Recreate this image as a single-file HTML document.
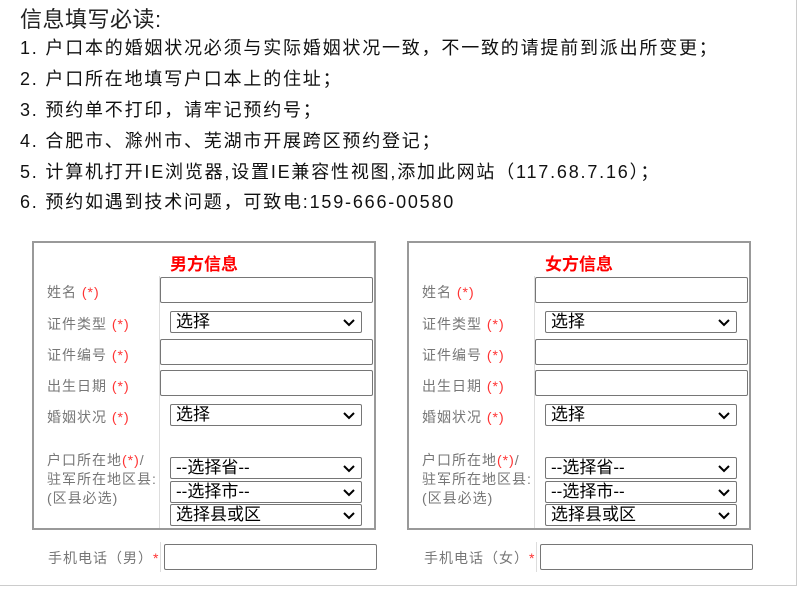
<!DOCTYPE html>
<html><head><meta charset="utf-8"><style>
*{box-sizing:border-box;margin:0;padding:0}
body{width:798px;height:596px;position:relative;background:#fff;font-family:"Liberation Sans","Noto Sans CJK SC",sans-serif;overflow:hidden}
.pg{position:absolute;left:0;top:0;width:797px;height:586px;border-right:1px solid #ccc;border-bottom:1px solid #ccc}
.t{position:absolute;left:20px;top:2px;font-size:22px;color:#222;letter-spacing:0.5px}
.l{position:absolute;left:20px;font-size:18px;color:#111;white-space:nowrap;letter-spacing:1.8px}
.box{position:absolute;top:241px;width:344px;height:289px;border:2px solid #999}
.box>*{position:absolute}
.h{left:0;width:340px;text-align:center;top:7px;color:#f00;font-weight:bold;font-size:17px}
.dv{left:125px;top:33px;bottom:0;width:1px;background:#ddd}
.lb{left:13px;font-size:14px;color:#777;white-space:nowrap;line-height:18px;letter-spacing:1px}
.r{color:#f33}
.in{left:126px;width:213px;height:26px;border:1px solid #767676;border-radius:2px}
.se{left:136px;width:192px;height:22px;border:1px solid #767676;border-radius:2px;font-size:17px;line-height:20px;padding-left:5px;color:#000;white-space:nowrap}
.se svg{position:absolute;right:6px;top:7px}
.ph{position:absolute;top:548px;font-size:14px;color:#777;letter-spacing:1px}
.pi{position:absolute;top:544px;width:213px;height:26px;border:1px solid #767676;border-radius:2px}
.pd{position:absolute;top:542px;width:1px;height:30px;background:#ddd}
</style></head><body>
<div class="pg"></div>
<div class="t">信息填写必读:</div>
<div class="l" style="top:34px">1. 户口本的婚姻状况必须与实际婚姻状况一致，不一致的请提前到派出所变更；</div>
<div class="l" style="top:65px">2. 户口所在地填写户口本上的住址；</div>
<div class="l" style="top:96px">3. 预约单不打印，请牢记预约号；</div>
<div class="l" style="top:127px">4. 合肥市、滁州市、芜湖市开展跨区预约登记；</div>
<div class="l" style="top:158px">5. 计算机打开IE浏览器,设置IE兼容性视图,添加此网站（117.68.7.16）；</div>
<div class="l" style="top:188px">6. 预约如遇到技术问题，可致电:159-666-00580</div>

<div class="box" style="left:32px">
<div class="h">男方信息</div>
<div class="dv"></div>
<div class="lb" style="top:40px">姓名 <span class="r">(*)</span></div>
<div class="lb" style="top:72px">证件类型 <span class="r">(*)</span></div>
<div class="lb" style="top:103px">证件编号 <span class="r">(*)</span></div>
<div class="lb" style="top:134px">出生日期 <span class="r">(*)</span></div>
<div class="lb" style="top:165px">婚姻状况 <span class="r">(*)</span></div>
<div class="lb" style="top:208px;line-height:19px">户口所在地<span class="r">(*)</span>/<br>驻军所在地区县:<br>(区县必选)</div>
<div class="in" style="top:34px"></div>
<div class="se" style="top:68px">选择<svg width="12" height="8"><path d="M1 1l5 5 5-5" fill="none" stroke="#000" stroke-width="2"/></svg></div>
<div class="in" style="top:96px"></div>
<div class="in" style="top:127px"></div>
<div class="se" style="top:161px">选择<svg width="12" height="8"><path d="M1 1l5 5 5-5" fill="none" stroke="#000" stroke-width="2"/></svg></div>
<div class="se" style="top:214px">--选择省--<svg width="12" height="8"><path d="M1 1l5 5 5-5" fill="none" stroke="#000" stroke-width="2"/></svg></div>
<div class="se" style="top:238px">--选择市--<svg width="12" height="8"><path d="M1 1l5 5 5-5" fill="none" stroke="#000" stroke-width="2"/></svg></div>
<div class="se" style="top:261px">选择县或区<svg width="12" height="8"><path d="M1 1l5 5 5-5" fill="none" stroke="#000" stroke-width="2"/></svg></div>
</div>

<div class="box" style="left:407px">
<div class="h">女方信息</div>
<div class="dv"></div>
<div class="lb" style="top:40px">姓名 <span class="r">(*)</span></div>
<div class="lb" style="top:72px">证件类型 <span class="r">(*)</span></div>
<div class="lb" style="top:103px">证件编号 <span class="r">(*)</span></div>
<div class="lb" style="top:134px">出生日期 <span class="r">(*)</span></div>
<div class="lb" style="top:165px">婚姻状况 <span class="r">(*)</span></div>
<div class="lb" style="top:208px;line-height:19px">户口所在地<span class="r">(*)</span>/<br>驻军所在地区县:<br>(区县必选)</div>
<div class="in" style="top:34px"></div>
<div class="se" style="top:68px">选择<svg width="12" height="8"><path d="M1 1l5 5 5-5" fill="none" stroke="#000" stroke-width="2"/></svg></div>
<div class="in" style="top:96px"></div>
<div class="in" style="top:127px"></div>
<div class="se" style="top:161px">选择<svg width="12" height="8"><path d="M1 1l5 5 5-5" fill="none" stroke="#000" stroke-width="2"/></svg></div>
<div class="se" style="top:214px">--选择省--<svg width="12" height="8"><path d="M1 1l5 5 5-5" fill="none" stroke="#000" stroke-width="2"/></svg></div>
<div class="se" style="top:238px">--选择市--<svg width="12" height="8"><path d="M1 1l5 5 5-5" fill="none" stroke="#000" stroke-width="2"/></svg></div>
<div class="se" style="top:261px">选择县或区<svg width="12" height="8"><path d="M1 1l5 5 5-5" fill="none" stroke="#000" stroke-width="2"/></svg></div>
</div>

<div class="ph" style="left:48px">手机电话（男）<span class="r">*</span></div>
<div class="pd" style="left:160px"></div>
<div class="pi" style="left:164px"></div>
<div class="ph" style="left:424px">手机电话（女）<span class="r">*</span></div>
<div class="pd" style="left:536px"></div>
<div class="pi" style="left:540px"></div>
</body></html>
